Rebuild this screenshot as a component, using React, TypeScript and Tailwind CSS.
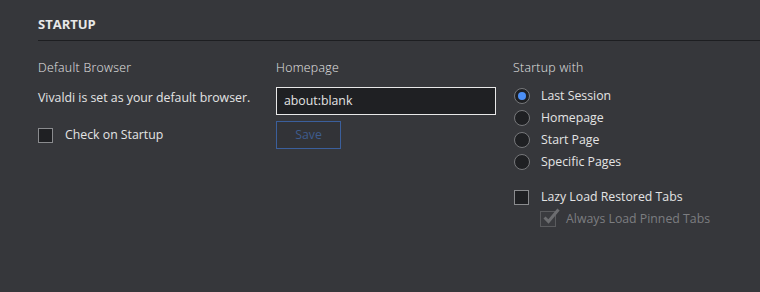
import React from "react";

function Radio({ label, checked }: { label: string; checked?: boolean }) {
  return (
    <div className="flex items-center h-[22px]">
      <span className="w-[16px] h-[16px] rounded-full border border-[#77787b] bg-[#1f2023] flex items-center justify-center">
        {checked && <span className="w-[8px] h-[8px] rounded-full bg-[#4b8ef5]" />}
      </span>
      <span className="ml-[11px] text-[#e4e4e4]">{label}</span>
    </div>
  );
}

function Check({ label, checked, disabled }: { label: string; checked?: boolean; disabled?: boolean }) {
  return (
    <div className="flex items-center h-[22px]">
      <span
        className={
          disabled
            ? "relative w-[16px] h-[16px] border border-[#5a5b5e] bg-[#3a3b3f]"
            : "w-[15px] h-[15px] border border-[#8a8b8e] bg-[#1f2023]"
        }
      >
        {checked && (
          <svg width="20" height="20" viewBox="0 0 20 20" className="absolute -top-[6px] left-[1px]">
            <path d="M2.5 11.5 L6.5 15.5 L16.5 3.5" fill="none" stroke="#6c6d70" strokeWidth="3" />
          </svg>
        )}
      </span>
      <span className={disabled ? "ml-[10px] text-[#7c7d80]" : "ml-[12px] text-[#e4e4e4]"}>{label}</span>
    </div>
  );
}

export default function App() {
  return (
    <div className="w-[760px] h-[292px] overflow-hidden bg-[#36373b] pl-[38px] pt-[14px] font-['Open_Sans',sans-serif] text-[12.3px] text-[#e4e4e4]">
      <div className="text-[13px] font-bold text-[#e8e8e8] leading-[20px] pb-[6px] border-b border-[#1d1e21]">STARTUP</div>
      <div className="grid grid-cols-[238px_237px_1fr] pt-[17px]">
        <div>
          <div className="font-light tracking-[0.3px] leading-[20px] text-[#e6e6e6]">Default Browser</div>
          <div className="mt-[10px] leading-[20px]">Vivaldi is set as your default browser.</div>
          <div className="mt-[16px]">
            <Check label="Check on Startup" />
          </div>
        </div>
        <div>
          <div className="font-light tracking-[0.3px] leading-[20px] text-[#e6e6e6]">Homepage</div>
          <div className="mt-[9px] w-[220px] h-[28px] border border-[#e8e8e8] bg-[#1f2023] flex items-center px-[7px]">
            about:blank
          </div>
          <div className="mt-[6px] w-[65px] h-[28px] border border-[#3b5f9c] bg-[#323337] flex items-center justify-center text-[#3e5c8e]">
            Save
          </div>
        </div>
        <div>
          <div className="font-light tracking-[0.3px] leading-[20px] text-[#e6e6e6]">Startup with</div>
          <div className="mt-[7px] ml-[1px]">
            <Radio label="Last Session" checked />
            <Radio label="Homepage" />
            <Radio label="Start Page" />
            <Radio label="Specific Pages" />
          </div>
          <div className="mt-[13px] ml-[1px]">
            <Check label="Lazy Load Restored Tabs" />
            <div className="ml-[26px]">
              <Check label="Always Load Pinned Tabs" checked disabled />
            </div>
          </div>
        </div>
      </div>
    </div>
  );
}
